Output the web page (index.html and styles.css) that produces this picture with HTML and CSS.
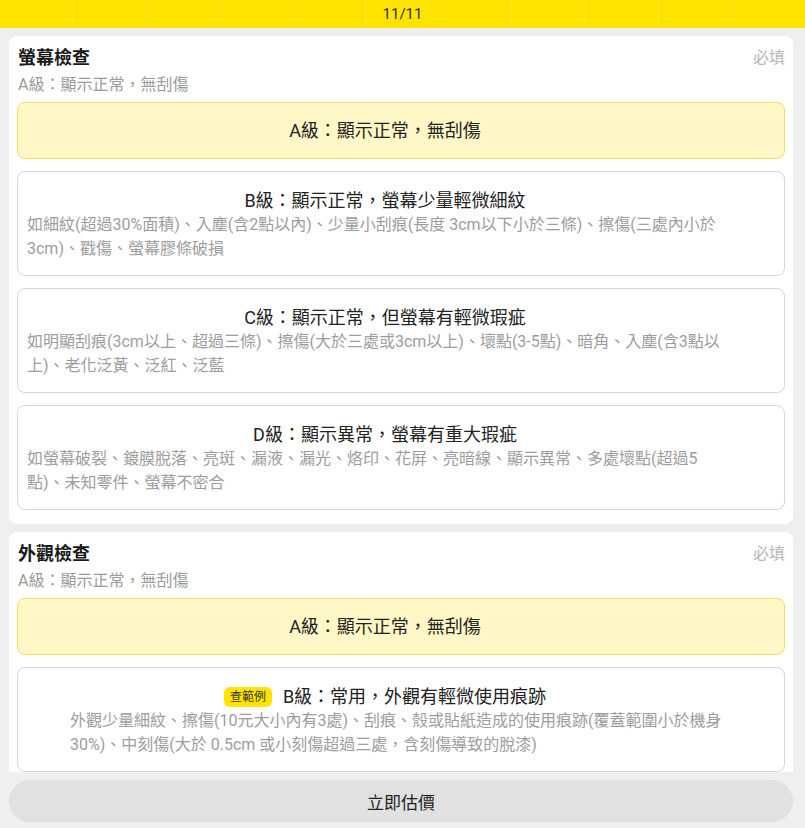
FILE: index.html
```html
<!DOCTYPE html>
<html lang="zh-Hant">
<head>
<meta charset="utf-8">
<title>估價</title>
<link rel="stylesheet" href="styles.css">
</head>
<body>
<div class="app">
  <header class="progress">
    <div class="segments">
      <span></span><span></span><span></span><span></span><span></span><span></span><span></span><span></span><span></span><span></span><span></span>
    </div>
    <div class="progress-label">11/11</div>
  </header>

  <main class="content">
    <section class="card">
      <div class="card-head">
        <h2 class="card-title">螢幕檢查</h2>
        <span class="required">必填</span>
      </div>
      <div class="card-sub">A級：顯示正常，無刮傷</div>
      <div class="options">
        <div class="option selected">
          <div class="opt-title">A級：顯示正常，無刮傷</div>
        </div>
        <div class="option">
          <div class="opt-title">B級：顯示正常，螢幕少量輕微細紋</div>
          <div class="opt-desc">如細紋(超過30%面積)、入塵(含2點以內)、少量小刮痕(長度 3cm以下小於三條)、擦傷(三處內小於<br>3cm)、戳傷、螢幕膠條破損</div>
        </div>
        <div class="option">
          <div class="opt-title">C級：顯示正常，但螢幕有輕微瑕疵</div>
          <div class="opt-desc">如明顯刮痕(3cm以上、超過三條)、擦傷(大於三處或3cm以上)、壞點(3-5點)、暗角、入塵(含3點以<br>上)、老化泛黃、泛紅、泛藍</div>
        </div>
        <div class="option">
          <div class="opt-title">D級：顯示異常，螢幕有重大瑕疵</div>
          <div class="opt-desc">如螢幕破裂、鍍膜脫落、亮斑、漏液、漏光、烙印、花屏、亮暗線、顯示異常、多處壞點(超過5<br>點)、未知零件、螢幕不密合</div>
        </div>
      </div>
    </section>

    <section class="card">
      <div class="card-head">
        <h2 class="card-title">外觀檢查</h2>
        <span class="required">必填</span>
      </div>
      <div class="card-sub">A級：顯示正常，無刮傷</div>
      <div class="options">
        <div class="option selected">
          <div class="opt-title">A級：顯示正常，無刮傷</div>
        </div>
        <div class="option">
          <div class="opt-title"><span class="badge">查範例</span>B級：常用，外觀有輕微使用痕跡</div>
          <div class="opt-desc indented">外觀少量細紋、擦傷(10元大小內有3處)、刮痕、殼或貼紙造成的使用痕跡(覆蓋範圍小於機身<br>30%)、中刻傷(大於 0.5cm 或小刻傷超過三處，含刻傷導致的脫漆)</div>
        </div>
      </div>
    </section>
  </main>

  <footer class="footer">
    <button class="estimate">立即估價</button>
  </footer>
</div>
</body>
</html>
```

FILE: styles.css
```css
* { box-sizing: border-box; }

html, body {
  margin: 0;
  padding: 0;
}

body {
  background: #efefef;
  font-family: Roboto, "Noto Sans CJK TC", "Noto Sans", sans-serif;
  color: #1c1c1c;
}

.app {
  height: 828px;
  display: flex;
  flex-direction: column;
  overflow: hidden;
}

/* progress bar */
.progress {
  height: 28px;
  flex: none;
  display: grid;
  background: #ffe400;
}
.segments, .progress-label {
  grid-area: 1 / 1;
}
.segments {
  display: grid;
  grid-template-columns: repeat(11, 1fr);
}
.segments span {
  border-right: 1px solid rgba(255, 255, 255, 0.12);
}
.segments span:last-child { border-right: none; }
.progress-label {
  text-align: center;
  font-size: 15px;
  line-height: 28px;
  color: #333;
}

/* content */
.content {
  flex: 1;
  min-height: 0;
  overflow: hidden;
  padding: 8px 12px 0 9px;
  display: flex;
  flex-direction: column;
  gap: 8px;
}

.card {
  flex: none;
  background: #fff;
  border-radius: 8px;
  padding: 10px 8px 14px 8px;
}

.card-head {
  display: flex;
  justify-content: space-between;
  align-items: center;
  padding: 0 0 0 1px;
}
.card-title {
  margin: 0;
  font-size: 18px;
  font-weight: 700;
  line-height: 24px;
  color: #1a1a1a;
}
.required {
  font-size: 16px;
  line-height: 24px;
  color: #b8b8b8;
}
.card-sub {
  margin-top: 3px;
  padding-left: 1px;
  font-size: 16px;
  line-height: 24px;
  color: #9a9a9a;
}

.options {
  margin-top: 5px;
  display: flex;
  flex-direction: column;
  gap: 12px;
}

.option {
  border: 1px solid #d7d7d7;
  border-radius: 8px;
  background: #fff;
  padding: 17px 41px 14px 9px;
}
.option.selected {
  background: #fff8c6;
  border-color: #f3dc63;
  padding: 16px 41px 15px 9px;
}

.opt-title {
  text-align: center;
  font-size: 18px;
  line-height: 24px;
  color: #222;
  display: flex;
  justify-content: center;
  align-items: center;
  gap: 11px;
}

.opt-desc {
  font-size: 16px;
  line-height: 24px;
  color: #9d9d9d;
  white-space: nowrap;
}
.opt-desc.indented {
  padding-left: 43px;
}

.badge {
  background: #ffe400;
  color: #333;
  font-size: 12px;
  line-height: 20px;
  height: 20px;
  padding: 0 6px;
  border-radius: 6px;
}

/* footer */
.footer {
  flex: none;
  padding: 8px 12px 6px 9px;
  background: #efefef;
}
.estimate {
  display: block;
  width: 100%;
  height: 42px;
  border: none;
  border-radius: 21px;
  background: #e1e1e1;
  font-family: Roboto, "Noto Sans CJK TC", sans-serif;
  font-size: 17px;
  color: #222;
}
```
